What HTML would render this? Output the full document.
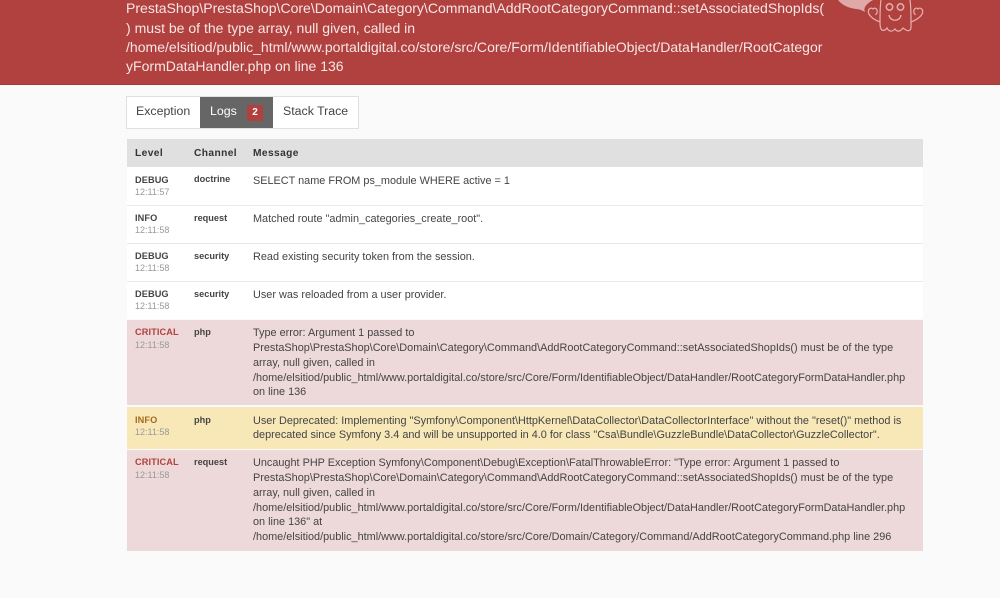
<!DOCTYPE html>
<html><head><meta charset="utf-8"><style>
html,body{margin:0;padding:0;width:1000px;height:598px;overflow:hidden;background:#fafafa;font-family:"Liberation Sans",sans-serif;color:#222}
div{position:absolute}
#w{left:0;top:0;width:1000px;height:598px;filter:blur(.3px)}
.t{white-space:nowrap}
.h{left:126px;color:#f6e6e6;font-size:14.04px;line-height:18px}
.r{left:127px;width:796px}
.m{left:253px;font-size:10.88px;line-height:15px;color:#444}
.l{left:135px;font-size:9.2px;line-height:12px;font-weight:bold;color:#444;letter-spacing:.1px}
.c{left:194px;font-size:9.2px;line-height:12px;font-weight:bold;color:#444}
.d{left:135px;font-size:9px;line-height:12px;color:#999}
.k{font-size:10.2px;line-height:12px;font-weight:bold;color:#333;letter-spacing:.4px}
.s{font-size:12.35px;line-height:15px;color:#444}
</style></head><body><div id="w">
<div style="left:0;top:0;width:1000px;height:84px;background:#b0413e;border-bottom:1px solid #a33a38"></div>
<div class="t h" style="top:-1px">PrestaShop\PrestaShop\Core\Domain\Category\Command\AddRootCategoryCommand::setAssociatedShopIds(</div>
<div class="t h" style="top:19px">) must be of the type array, null given, called in</div>
<div class="t h" style="top:38px">/home/elsitiod/public_html/www.portaldigital.co/store/src/Core/Form/IdentifiableObject/DataHandler/RootCategor</div>
<div class="t h" style="top:57px">yFormDataHandler.php on line 136</div>
<svg style="position:absolute;left:830px;top:0" width="100" height="34" viewBox="0 0 100 34" fill="none">
<path d="M8 0C12 5 18 8 26 9C30 9 33 11 35 12C33 8 36 4 43 0Z" fill="#dfa9a8"/>
<path d="M50 22C50 14 50 6 51 0M80 0C81 6 81 14 81 24C81 27 81.500 29 80 30C77 32 75 29 73 28C70 32 67 32 65 29C62 32 59 32 57 28C55 31 52 31 51 29C50 27 50 25 50 22" stroke="#e3b2b0" stroke-width="1.200"/>
<circle cx="59.500" cy="7" r="3.200" stroke="#e3b2b0" stroke-width="1.500"/><circle cx="70.500" cy="7" r="3.200" stroke="#e3b2b0" stroke-width="1.500"/>
<path d="M59 15C60 22 70 22 71 15" stroke="#e3b2b0" stroke-width="1.300"/>
<path d="M50 22C45 20 40 17 38.500 13C37.500 9 41 7 43 9C45 7 48 9 47 13L45.500 15" stroke="#e3b2b0" stroke-width="1.200"/>
<path d="M81 22C86 20 91 17 92.500 13C93.500 9 90 7 88 9C86 7 83 9 84 13L85.500 15" stroke="#e3b2b0" stroke-width="1.200"/>
</svg>

<div style="left:126px;top:96px;width:231px;height:31px;background:#fff;border:1px solid #e0e0e0"></div>
<div style="left:200px;top:97px;width:73px;height:31px;background:#666"></div>
<div class="t s" style="left:136px;top:104px">Exception</div>
<div class="t s" style="left:210px;top:104px;color:#fff">Logs</div>
<div class="t" style="left:247px;top:105px;width:16px;height:16px;background:#b0413e;border-radius:2px;color:#fff;font-size:10px;font-weight:bold;line-height:16px;text-align:center">2</div>
<div class="t s" style="left:283px;top:104px">Stack Trace</div>

<div class="r" style="top:139px;height:28px;background:#e0e0e0"></div>
<div class="t k" style="left:135px;top:148px">Level</div>
<div class="t k" style="left:194px;top:148px">Channel</div>
<div class="t k" style="left:253px;top:148px">Message</div>

<div class="r" style="top:167px;height:152px;background:#e9e9e9"></div>
<div class="r" style="top:167px;height:38px;background:#fff"></div>
<div class="r" style="top:206px;height:37px;background:#fff"></div>
<div class="r" style="top:244px;height:37px;background:#fff"></div>
<div class="r" style="top:282px;height:37px;background:#fff"></div>
<div class="r" style="top:320px;height:85px;background:#eed9da"></div>
<div class="r" style="top:407px;height:42px;background:#f8e8b8"></div>
<div class="r" style="top:450px;height:101px;background:#eed9da"></div>

<div class="t l" style="top:174px">DEBUG</div><div class="t d" style="top:186px">12:11:57</div><div class="t c" style="top:173px">doctrine</div>
<div class="t m" style="top:174px">SELECT name FROM ps_module WHERE active = 1</div>

<div class="t l" style="top:212px">INFO</div><div class="t d" style="top:224px">12:11:58</div><div class="t c" style="top:212px">request</div>
<div class="t m" style="top:212px">Matched route "admin_categories_create_root".</div>

<div class="t l" style="top:250px">DEBUG</div><div class="t d" style="top:262px">12:11:58</div><div class="t c" style="top:250px">security</div>
<div class="t m" style="top:250px">Read existing security token from the session.</div>

<div class="t l" style="top:288px">DEBUG</div><div class="t d" style="top:300px">12:11:58</div><div class="t c" style="top:288px">security</div>
<div class="t m" style="top:288px">User was reloaded from a user provider.</div>

<div class="t l" style="top:326px;color:#b0413e">CRITICAL</div><div class="t d" style="top:339px">12:11:58</div><div class="t c" style="top:326px">php</div>
<div class="t m" style="top:326px">Type error: Argument 1 passed to</div>
<div class="t m" style="top:341px">PrestaShop\PrestaShop\Core\Domain\Category\Command\AddRootCategoryCommand::setAssociatedShopIds() must be of the type</div>
<div class="t m" style="top:356px">array, null given, called in</div>
<div class="t m" style="top:371px">/home/elsitiod/public_html/www.portaldigital.co/store/src/Core/Form/IdentifiableObject/DataHandler/RootCategoryFormDataHandler.php</div>
<div class="t m" style="top:385px">on line 136</div>

<div class="t l" style="top:414px;color:#a46a1f">INFO</div><div class="t d" style="top:426px">12:11:58</div><div class="t c" style="top:414px">php</div>
<div class="t m" style="top:414px">User Deprecated: Implementing "Symfony\Component\HttpKernel\DataCollector\DataCollectorInterface" without the "reset()" method is</div>
<div class="t m" style="top:428px">deprecated since Symfony 3.4 and will be unsupported in 4.0 for class "Csa\Bundle\GuzzleBundle\DataCollector\GuzzleCollector".</div>

<div class="t l" style="top:456px;color:#b0413e">CRITICAL</div><div class="t d" style="top:469px">12:11:58</div><div class="t c" style="top:456px">request</div>
<div class="t m" style="top:456px">Uncaught PHP Exception Symfony\Component\Debug\Exception\FatalThrowableError: "Type error: Argument 1 passed to</div>
<div class="t m" style="top:471px">PrestaShop\PrestaShop\Core\Domain\Category\Command\AddRootCategoryCommand::setAssociatedShopIds() must be of the type</div>
<div class="t m" style="top:486px">array, null given, called in</div>
<div class="t m" style="top:501px">/home/elsitiod/public_html/www.portaldigital.co/store/src/Core/Form/IdentifiableObject/DataHandler/RootCategoryFormDataHandler.php</div>
<div class="t m" style="top:515px">on line 136" at</div>
<div class="t m" style="top:530px">/home/elsitiod/public_html/www.portaldigital.co/store/src/Core/Domain/Category/Command/AddRootCategoryCommand.php line 296</div>
</div></body></html>
